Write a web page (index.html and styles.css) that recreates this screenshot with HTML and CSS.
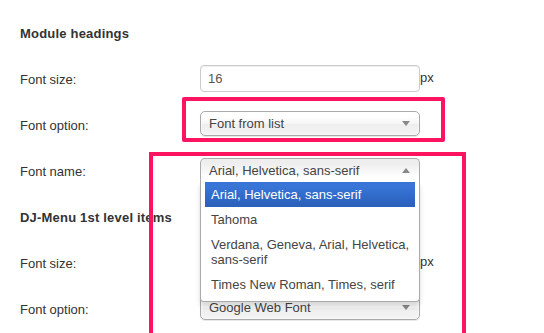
FILE: index.html
```html
<!DOCTYPE html>
<html lang="en">
<head>
    <meta charset="UTF-8">
    <meta name="viewport" content="width=device-width, initial-scale=1.0">
    <title>Font settings</title>
    <link rel="stylesheet" href="styles.css">
</head>
<body>
    <div class="pane">
        <div class="row">
            <span class="label"></span>
            <input type="text" class="text-input" value="">
        </div>

        <div class="row heading">Module headings</div>

        <div class="row">
            <label class="label">Font size:</label>
            <input type="text" class="text-input" value="16">
            <span class="unit">px</span>
        </div>

        <div class="row">
            <label class="label">Font option:</label>
            <div class="chzn">
                <a class="chzn-single">
                    <span>Font from list</span>
                    <svg class="arrow" width="8" height="5" viewBox="0 0 8 5"><polygon points="0,0 8,0 4,5" fill="#888"/></svg>
                </a>
            </div>
        </div>

        <div class="row">
            <label class="label">Font name:</label>
            <div class="chzn chzn-open">
                <a class="chzn-single">
                    <span>Arial, Helvetica, sans-serif</span>
                    <svg class="arrow" width="8" height="5" viewBox="0 0 8 5"><polygon points="0,5 8,5 4,0" fill="#888"/></svg>
                </a>
                <div class="chzn-drop">
                    <ul class="chzn-results">
                        <li class="highlighted">Arial, Helvetica, sans-serif</li>
                        <li>Tahoma</li>
                        <li>Verdana, Geneva, Arial, Helvetica, sans-serif</li>
                        <li>Times New Roman, Times, serif</li>
                    </ul>
                </div>
            </div>
        </div>

        <div class="row heading">DJ-Menu 1st level items</div>

        <div class="row">
            <label class="label">Font size:</label>
            <input type="text" class="text-input" value="">
            <span class="unit">px</span>
        </div>

        <div class="row">
            <label class="label">Font option:</label>
            <div class="chzn">
                <a class="chzn-single">
                    <span>Google Web Font</span>
                    <svg class="arrow" width="8" height="5" viewBox="0 0 8 5"><polygon points="0,0 8,0 4,5" fill="#888"/></svg>
                </a>
            </div>
        </div>
    </div>

    <!-- highlight marks drawn over the form -->
    <div class="mark mark-option"></div>
    <div class="mark mark-name"></div>
</body>
</html>
```

FILE: styles.css
```css
html, body {
    overflow: hidden;
}
body {
    margin: 0;
    background: white;
    font-family: 'Liberation Sans', Arial, sans-serif;
    font-size: 13px;
    color: #333;
}
.pane {
    margin-top: -36px;
    padding-left: 20px;
}
.row {
    display: flex;
    align-items: center;
    height: 46px;
}
.heading {
    font-weight: bold;
    letter-spacing: 0.2px;
}
.label {
    width: 180px;
    flex: none;
}
.text-input {
    box-sizing: border-box;
    width: 220px;
    height: 27px;
    margin: 0 0 1px 0;
    padding: 0 7px;
    border: 1px solid #ccc;
    border-radius: 4px;
    box-shadow: inset 0 1px 1px rgba(0, 0, 0, 0.075);
    font-family: inherit;
    font-size: 13px;
    color: #555;
    outline: none;
}
.unit {
    margin-bottom: 3px;
}
.chzn {
    position: relative;
    width: 220px;
    margin-bottom: 3px;
}
.chzn-single {
    display: flex;
    align-items: center;
    justify-content: space-between;
    box-sizing: border-box;
    height: 25px;
    padding: 0 9px 0 8px;
    border: 1px solid #aaa;
    border-radius: 5px;
    background: linear-gradient(#fff 20%, #f6f6f6 50%, #eee 52%, #f4f4f4 100%);
    box-shadow: inset 0 0 3px white, 0 1px 1px rgba(0, 0, 0, 0.1);
    color: #444;
    line-height: 23px;
}
.arrow {
    flex: none;
}
.chzn-open .chzn-single {
    height: 24px;
    border-bottom: 0;
    border-radius: 5px 5px 0 0;
    background: linear-gradient(#eee 20%, #fff 80%);
    box-shadow: none;
}
.chzn-drop {
    position: absolute;
    top: 100%;
    left: 0;
    right: 0;
    z-index: 10;
    box-sizing: border-box;
    border: 1px solid #aaa;
    border-top: 0;
    border-radius: 0 0 4px 4px;
    background: white;
    box-shadow: 0 4px 5px rgba(0, 0, 0, 0.15);
}
.chzn-results {
    margin: 0 4px 4px 0;
    padding: 0 0 0 4px;
    list-style: none;
    color: #444;
}
.chzn-results li {
    padding: 5px 6px;
    line-height: 15px;
}
.chzn-results .highlighted {
    background: linear-gradient(#3875d7 20%, #2a62bc 90%);
    color: white;
}
.mark {
    position: absolute;
    z-index: 20;
    border: 4px solid #fc1461;
    pointer-events: none;
}
.mark-option {
    left: 182px;
    top: 97px;
    width: 255px;
    height: 37px;
    border-radius: 2px;
}
.mark-name {
    left: 149px;
    top: 152px;
    width: 309px;
    height: 177px;
    border-bottom: 0;
}
```
